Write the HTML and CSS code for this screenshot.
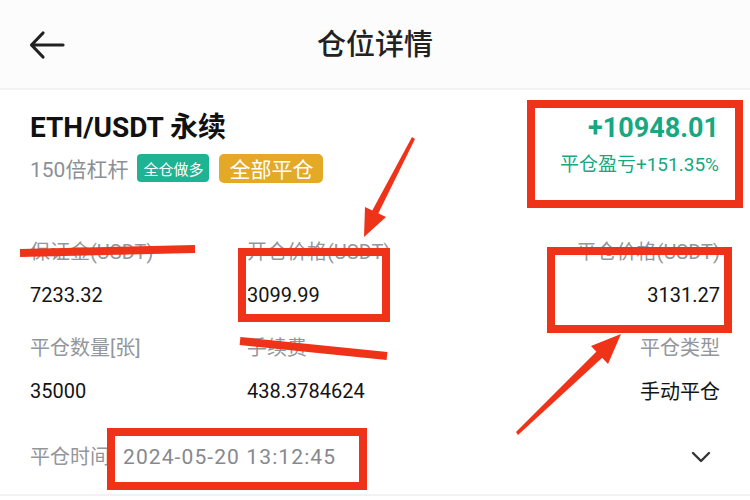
FILE: index.html
```html
<!DOCTYPE html>
<html lang="zh-CN">
<head>
<meta charset="utf-8">
<title>仓位详情</title>
<link rel="stylesheet" href="styles.css">
</head>
<body>
<div class="page">
  <header class="topbar">
    <div class="back">
      <svg width="36" height="30" viewBox="0 0 36 30"><path d="M34 15H3M14 3L2.5 15 14 27" fill="none" stroke="#222" stroke-width="3.2" stroke-linecap="round" stroke-linejoin="round"/></svg>
    </div>
    <h1 class="title">仓位详情</h1>
    <div class="spacer"></div>
  </header>

  <section class="summary">
    <div class="pair">
      <div class="pair-name">ETH/USDT 永续</div>
      <div class="pair-meta">
        <span class="lev">150倍杠杆</span>
        <span class="badge badge-green">全仓做多</span>
        <span class="badge badge-yellow">全部平仓</span>
      </div>
    </div>
    <div class="pnl">
      <div class="pnl-value">+10948.01</div>
      <div class="pnl-sub">平仓盈亏+151.35%</div>
    </div>
  </section>

  <section class="details">
    <div class="cell">
      <div class="label">保证金(USDT)</div>
      <div class="value">7233.32</div>
    </div>
    <div class="cell">
      <div class="label">开仓价格(USDT)</div>
      <div class="value">3099.99</div>
    </div>
    <div class="cell right">
      <div class="label">平仓价格(USDT)</div>
      <div class="value">3131.27</div>
    </div>
    <div class="cell">
      <div class="label">平仓数量[张]</div>
      <div class="value">35000</div>
    </div>
    <div class="cell">
      <div class="label">手续费</div>
      <div class="value">438.3784624</div>
    </div>
    <div class="cell right">
      <div class="label">平仓类型</div>
      <div class="value cjk">手动平仓</div>
    </div>
  </section>

  <section class="time-row">
    <span class="label">平仓时间</span>
    <span class="time">2024-05-20 13:12:45</span>
    <svg class="chev" width="20" height="12" viewBox="0 0 20 12"><path d="M2 2l8 8 8-8" fill="none" stroke="#333" stroke-width="2.4" stroke-linecap="round" stroke-linejoin="round"/></svg>
  </section>

  <svg class="marks" width="750" height="500" viewBox="0 0 750 500">
    <g fill="none" stroke="#ee3319" stroke-width="8">
      <rect x="531" y="104" width="208" height="100"/>
      <rect x="242" y="252" width="144" height="66"/>
      <rect x="551" y="251" width="177" height="78"/>
      <rect x="111" y="432" width="252" height="54"/>
    </g>
    <g stroke="#ee3319" stroke-linecap="butt">
      <line x1="20" y1="253" x2="195" y2="249" stroke-width="8"/>
      <line x1="240" y1="341" x2="387" y2="356" stroke-width="8"/>
    </g>
    <g fill="#ee3319">
      <polygon points="412,137 415,139 378,214 372,211"/>
      <polygon points="364,237 386,217 365,207"/>
      <polygon points="516,432 518,435 603,357 597,351"/>
      <polygon points="621,334 608,364 591,346"/>
    </g>
  </svg>
</div>
</body>
</html>
```

FILE: styles.css
```css
* { box-sizing: border-box; }
html, body { margin: 0; padding: 0; background: #fff; }
body {
  font-family: Roboto, "Noto Sans CJK SC", "Noto Sans", sans-serif;
  color: #1c1c1c;
}
.page {
  position: relative;
  width: 750px;
  height: 500px;
  overflow: hidden;
}
.topbar {
  display: grid;
  grid-template-columns: 90px 1fr 90px;
  align-items: center;
  height: 90px;
  border-bottom: 2px solid #f1f3f3;
  background: #fcfcfc;
}
.back {
  padding-left: 29px;
  padding-top: 2px;
  display: flex;
  align-items: center;
}
.title {
  margin: 0;
  text-align: center;
  font-family: "Noto Sans CJK SC", sans-serif;
  font-size: 29px;
  font-weight: 500;
  color: #222;
  line-height: 36px;
  padding-bottom: 4px;
}
.summary {
  display: flex;
  justify-content: space-between;
  padding: 20px 31px 0 30px;
  height: 118px;
}
.pair-name {
  font-size: 28px;
  font-weight: 700;
  line-height: 36px;
  color: #111;
  font-family: Roboto, "Noto Sans CJK SC", sans-serif;
}
.pair-meta {
  display: flex;
  align-items: center;
  margin-top: 7px;
  height: 30px;
}
.lev {
  font-size: 21px;
  color: #8c9096;
  margin-right: 9px;
}
.badge {
  display: inline-flex;
  align-items: center;
  justify-content: center;
  color: #fff;
  font-family: "Noto Sans CJK SC", sans-serif;
}
.badge-green {
  background: #1db393;
  width: 72px;
  height: 28px;
  border-radius: 4px;
  font-size: 15px;
  margin-right: 10px;
}
.badge-yellow {
  background: #e3a927;
  width: 104px;
  height: 29px;
  border-radius: 5px;
  font-size: 21px;
}
.pnl { text-align: right; }
.pnl-value {
  font-size: 27px;
  font-weight: 700;
  color: #17a781;
  line-height: 36px;
}
.pnl-sub {
  margin-top: 5px;
  font-size: 19px;
  color: #17a781;
  line-height: 28px;
}
.details {
  display: grid;
  grid-template-columns: 217px 1fr auto;
  row-gap: 25px;
  padding: 30px 30px 0 30px;
}
.cell { display: flex; flex-direction: column; gap: 15px; }
.cell.right { text-align: right; }
.label {
  font-size: 20px;
  line-height: 28px;
  color: #93969b;
}
.value {
  font-size: 20px;
  line-height: 28px;
  color: #141414;
}
.value.cjk { font-family: "Noto Sans CJK SC", sans-serif; }
.time-row {
  display: flex;
  align-items: center;
  height: 76px;
  margin-top: 15px;
  padding: 0 30px;
  border-bottom: 2px solid #f1f2f2;
}
.time-row .label { margin-right: 13px; }
.time {
  font-size: 21px;
  letter-spacing: 1.1px;
  color: #86898e;
  flex: 1;
}
.chev { margin-right: 9px; margin-top: -1px; }
.marks {
  position: absolute;
  left: 0;
  top: 0;
  pointer-events: none;
}
```
